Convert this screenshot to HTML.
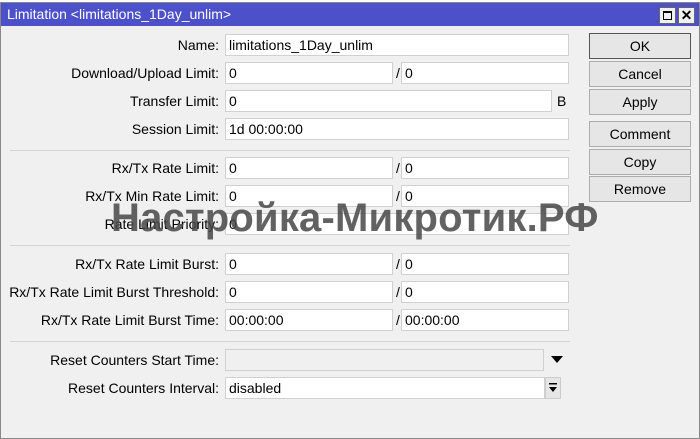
<!DOCTYPE html>
<html><head><meta charset="utf-8"><style>
*{box-sizing:border-box;margin:0;padding:0}
body{width:700px;height:439px;background:#fff;position:relative;overflow:hidden;font-family:"Liberation Sans",Arial,sans-serif;font-size:14px;color:#000}
.win{position:absolute;left:0;top:2px;width:700px;height:437px;background:#f0f0f0;border:1px solid #888}
.title{position:absolute;left:0;top:0;width:698px;height:23px;background:#4c50c9;color:#fff;font-size:14px;line-height:23px;padding-left:6px}
.tb{position:absolute;top:4px;width:17px;height:17px;background:#f0f0f0;border:1px solid #666}
.lbl{position:absolute;right:481px;text-align:right;white-space:nowrap;line-height:22px}
.f{position:absolute;height:22px;background:#fff;border:1px solid #d0d0d0;line-height:20px;padding-left:3px}
.f.d{background:#f0f0f0}
.sl{position:absolute;left:396px;line-height:22px}
.sep{position:absolute;left:10px;width:560px;height:1px;background:#d4d4d4}
.btn{position:absolute;left:589px;width:102px;background:#e6e6e6;border:1px solid #adadad;text-align:center;font-size:14px}
.wm{position:absolute;left:111px;top:196px;font-size:40px;font-weight:bold;color:rgba(70,70,70,0.85);white-space:nowrap;letter-spacing:0.2px}
</style></head><body>
<div class="win">
<div class="title">Limitation &lt;limitations_1Day_unlim&gt;</div>
<div class="tb" style="left:658px"><div style="position:absolute;left:3px;top:3px;width:9px;height:9px;border:1px solid #000;border-top-width:2px"></div></div>
<div class="tb" style="left:677px;text-align:center;line-height:15px;font-size:14px;font-weight:bold">✕</div>
</div>
<div class="lbl" style="top:34px">Name:</div><div class="f" style="left:225px;top:34px;width:344px">limitations_1Day_unlim</div>
<div class="lbl" style="top:62px">Download/Upload Limit:</div><div class="f" style="left:225px;top:62px;width:168px">0</div><div class="sl" style="top:62px">/</div><div class="f" style="left:401px;top:62px;width:168px">0</div>
<div class="lbl" style="top:90px">Transfer Limit:</div><div class="f" style="left:225px;top:90px;width:327px">0</div><div style="position:absolute;left:557px;top:90px;line-height:22px">B</div>
<div class="lbl" style="top:118px">Session Limit:</div><div class="f" style="left:225px;top:118px;width:344px">1d 00:00:00</div>
<div class="sep" style="top:150px"></div>
<div class="lbl" style="top:157px">Rx/Tx Rate Limit:</div><div class="f" style="left:225px;top:157px;width:168px">0</div><div class="sl" style="top:157px">/</div><div class="f" style="left:401px;top:157px;width:168px">0</div>
<div class="lbl" style="top:185px">Rx/Tx Min Rate Limit:</div><div class="f" style="left:225px;top:185px;width:168px">0</div><div class="sl" style="top:185px">/</div><div class="f" style="left:401px;top:185px;width:168px">0</div>
<div class="lbl" style="top:213px">Rate Limit Priority:</div><div class="f" style="left:225px;top:213px;width:344px">0</div>
<div class="sep" style="top:245px"></div>
<div class="lbl" style="top:253px">Rx/Tx Rate Limit Burst:</div><div class="f" style="left:225px;top:253px;width:168px">0</div><div class="sl" style="top:253px">/</div><div class="f" style="left:401px;top:253px;width:168px">0</div>
<div class="lbl" style="top:281px">Rx/Tx Rate Limit Burst Threshold:</div><div class="f" style="left:225px;top:281px;width:168px">0</div><div class="sl" style="top:281px">/</div><div class="f" style="left:401px;top:281px;width:168px">0</div>
<div class="lbl" style="top:309px">Rx/Tx Rate Limit Burst Time:</div><div class="f" style="left:225px;top:309px;width:168px">00:00:00</div><div class="sl" style="top:309px">/</div><div class="f" style="left:401px;top:309px;width:168px">00:00:00</div>
<div class="sep" style="top:341px"></div>
<div class="lbl" style="top:349px">Reset Counters Start Time:</div><div class="f d" style="left:225px;top:349px;width:319px"></div>
<svg style="position:absolute;left:551px;top:356px" width="12" height="8"><path d="M0 0H12L6 7Z" fill="#000"/></svg>
<div class="lbl" style="top:377px">Reset Counters Interval:</div><div class="f" style="left:225px;top:377px;width:320px">disabled</div>
<div style="position:absolute;left:545px;top:377px;width:16px;height:22px;background:#e6e6e6;border:1px solid #ccc"><svg width="14" height="20"><rect x="3" y="5" width="8" height="1.5" fill="#000"/><path d="M3 9H11L7 14Z" fill="#000"/></svg></div>
<div class="btn" style="top:33px;height:26px;line-height:24px;border-color:#555">OK</div>
<div class="btn" style="top:61px;height:26px;line-height:24px">Cancel</div>
<div class="btn" style="top:89px;height:26px;line-height:24px">Apply</div>
<div class="btn" style="top:121px;height:26px;line-height:24px">Comment</div>
<div class="btn" style="top:149px;height:26px;line-height:24px">Copy</div>
<div class="btn" style="top:176px;height:26px;line-height:24px">Remove</div>
<div class="wm">Настройка-Микротик.РФ</div>
</body></html>
